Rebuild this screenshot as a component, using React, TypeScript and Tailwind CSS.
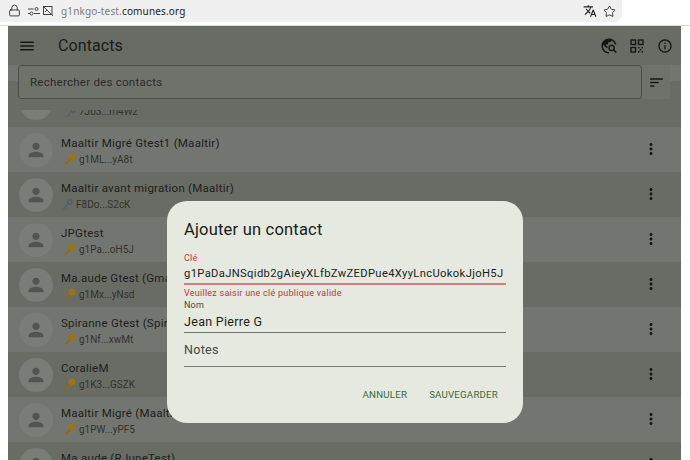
import { Lock, Star } from 'lucide-react'
import { MdInfoOutline, MdMenu, MdMoreVert, MdPerson, MdSort, MdTranslate, MdTravelExplore } from 'react-icons/md'

const CONTACTS: { name: string; short: string; old?: boolean }[] = [
  { name: 'Maaltir Migré Gtest1 (Maaltir)', short: 'g1ML...yA8t' },
  { name: 'Maaltir avant migration (Maaltir)', short: 'F8Do...S2cK', old: true },
  { name: 'JPGtest', short: 'g1Pa...oH5J' },
  { name: 'Ma.aude Gtest (Gmail)', short: 'g1Mx...yNsd' },
  { name: 'Spiranne Gtest (Spiranne)', short: 'g1Nf...xwMt' },
  { name: 'CoralieM', short: 'g1K3...GSZK' },
  { name: 'Maaltir Migré (Maaltir)', short: 'g1PW...yPF5' },
  { name: 'Ma.aude (RJuneTest)', short: 'g1Qa...tR7c' },
]

function KeyIcon({ old }: { old?: boolean }) {
  if (old) {
    return (
      <svg width="11" height="11" viewBox="0 0 11 11" className="shrink-0">
        <circle cx="8" cy="3" r="2" fill="none" stroke="#4f5f68" strokeWidth="1.3" />
        <path d="M6.5 4.5 1.2 9.8M2.6 8.4l1.2 1.2M3.8 7.2 5 8.4" stroke="#566269" strokeWidth="1.1" fill="none" />
      </svg>
    )
  }
  return (
    <svg width="12" height="12" viewBox="0 0 12 12" className="shrink-0">
      <circle cx="8" cy="4" r="3.6" fill="#9a7512" />
      <circle cx="9" cy="3" r="0.8" fill="#6f726b" />
      <path d="M6 5.4.6 10.4v1.2h2.400l.4-1.200h1.100l.3-1.200 2.200-2z" fill="#8f6c0e" />
    </svg>
  )
}

function Avatar() {
  return (
    <div className="w-[34px] h-[34px] shrink-0 rounded-full bg-[#7a7c77] flex items-center justify-center">
      <MdPerson size={22} color="#52544f" />
    </div>
  )
}

function Row({ c, light }: { c: (typeof CONTACTS)[number]; light: boolean }) {
  return (
    <div className={`h-[45px] shrink-0 flex items-center pl-[11px] pr-[21px] ${light ? 'bg-[#737670]' : 'bg-[#696c65]'}`}>
      <Avatar />
      <div className="flex-1 min-w-0 ml-[8px] pt-[2px]">
        <div className="text-[11.5px] leading-[16px] tracking-[0.25px] text-[#1d1e1b] whitespace-nowrap">{c.name}</div>
        <div className={`flex items-center gap-[3px] text-[10px] leading-[15px] text-[#30322d] mt-[1px] ${c.old ? 'pl-[1px]' : 'pl-[3px]'}`}>
          <KeyIcon old={c.old} />
          <span>{c.short}</span>
        </div>
      </div>
      <MdMoreVert size={18} color="#161714" className="shrink-0 -mt-[2px]" />
    </div>
  )
}

function Field({ label, value, error }: { label: string; value: string; error?: boolean }) {
  return (
    <div>
      <div className={`text-[9px] leading-[11px] tracking-[0.2px] ${error ? 'text-[#c5333c]' : 'text-[#44483f]'}`}>{label}</div>
      <div className={`leading-[16px] whitespace-nowrap text-[#1c1d19] ${error ? 'mt-[2px] text-[11.2px] tracking-[0.36px] pb-[1px] border-b-2 border-[#d97b7b]' : 'mt-[3px] text-[12.5px] tracking-[0.3px] pb-[2px] border-b border-[#74786e]'}`}>
        {value}
      </div>
    </div>
  )
}

export default function App() {
  return (
    <div className="relative w-[690px] h-[460px] overflow-hidden bg-white font-['Roboto',sans-serif]">
      <div className="h-[26px] border-b border-[#d8d8d8] pr-[68px]">
        <div className="h-[22px] bg-[#f0f0f0] rounded-br-[8px] flex items-center pl-[8px] pr-[6px]">
          <Lock size={13} strokeWidth={1.7} className="text-[#333] mb-[1px]" />
          <svg width="12" height="12" viewBox="0 0 12 12" fill="none" stroke="#444" strokeWidth="1" className="ml-[7px]">
            <path d="M0 4h5.500M0 8.500h2M6 8.500h6" />
            <circle cx="8.500" cy="4" r="1.500" />
            <circle cx="3.500" cy="8.500" r="1.500" />
          </svg>
          <svg width="12" height="12" viewBox="0 0 12 12" fill="none" stroke="#444" strokeWidth="1" className="ml-[2px]">
            <rect x="1.500" y="1.500" width="8.500" height="8" />
            <path d="m1 1 10 10M3 7l2-2 4 4" />
          </svg>
          <div className="ml-[7px] text-[10px] tracking-[0.15px] font-['Noto_Sans',sans-serif] text-[#7a7a7a] flex-1">
            g1nkgo-test.<span className="text-[#222]">comunes.org</span>
          </div>
          <MdTranslate size={14} color="#222" className="mr-[6px]" />
          <Star size={13} strokeWidth={1.6} className="text-[#222]" />
        </div>
      </div>

      <div className="relative ml-[8px] w-[673px] h-[434px] overflow-hidden bg-[#696c65] flex flex-col">
        <div className="h-[39px] shrink-0 flex items-center pl-[10px] pr-[8px] text-[#161714]">
          <MdMenu size={18} />
          <div className="ml-[22px] flex-1 text-[16px] tracking-[0.1px] text-[#1b1c19]">Contacts</div>
          <MdTravelExplore size={18} className="mr-[12px]" />
          <svg width="14" height="14" viewBox="0 0 14 14" fill="none" stroke="#161714" strokeWidth="1.400" className="mr-[13px]">
            <rect x="1" y="1" width="4.500" height="4.500" />
            <rect x="8.500" y="1" width="4.500" height="4.500" />
            <rect x="1" y="8.500" width="4.500" height="4.500" />
            <path d="M8 8h1.500v1.500H8zM11.500 8H13v1.500h-1.500zM9.700 10h1.600v1.600H9.700zM8 12h1.500v1.500H8zM11.500 12H13v1.500h-1.500z" fill="#161714" stroke="none" />
          </svg>
          <MdInfoOutline size={16} />
        </div>

        <div className="h-[16px] shrink-0 bg-[#737670]" />
        <div className="h-[46px] shrink-0 bg-[#696c65] flex items-end pl-[11px]">
          <div className="h-[10px] overflow-hidden flex items-end mb-[7px]">
            <div className="w-[34px] h-[34px] rounded-full bg-[#7a7c77]" />
          </div>
          <div className="h-[8px] overflow-hidden ml-[12px] mb-[9px] flex items-end gap-[3px] text-[10px] leading-[13px] text-[#30322d]">
            <KeyIcon old />
            <span>7Jb3...m4Wz</span>
          </div>
        </div>
        {CONTACTS.map((c, i) => (
          <Row key={c.short} c={c} light={i % 2 === 0} />
        ))}

        <div className="absolute left-[10px] top-[39px] flex">
          <div className="w-[624px] h-[34px] rounded-[3px] border border-[#4c4f49] bg-[#6f726b] flex items-center pl-[11px] pt-[1px] text-[11.5px] tracking-[0.25px] text-[#2b2c29]">
            Rechercher des contacts
          </div>
          <div className="w-[28px] h-[34px] bg-[#6f726b] pl-[6px] pt-[9px]">
            <MdSort size={17} color="#161714" />
          </div>
        </div>
      </div>

      <div className="absolute left-[167px] top-[201px] w-[356px] h-[222px] rounded-[20px] bg-[#e5e9df] px-[17px] pt-[18px]">
        <div className="text-[16.5px] leading-[20px] tracking-[0.2px] pt-[1px] text-[#1b1c18]">Ajouter un contact</div>
        <div className="mt-[13px]">
          <Field label="Clé" value="g1PaDaJNSqidb2gAieyXLfbZwZEDPue4XyyLncUokokJjoH5J" error />
        </div>
        <div className="text-[9px] leading-[11px] tracking-[0.25px] text-[#c5333c] mt-[3px]">Veuillez saisir une clé publique valide</div>
        <div className="mt-[1px]">
          <Field label="Nom" value="Jean Pierre G" />
        </div>
        <div className="mt-[8px] h-[26px] border-b border-[#74786e] text-[12.5px] leading-[18px] tracking-[0.3px] text-[#44483f]">Notes</div>
        <div className="flex justify-end gap-[22px] pr-[8px] mt-[21px] text-[9.7px] leading-[14px] tracking-[0.2px] text-[#39693c]">
          <span>ANNULER</span>
          <span>SAUVEGARDER</span>
        </div>
      </div>
    </div>
  )
}
